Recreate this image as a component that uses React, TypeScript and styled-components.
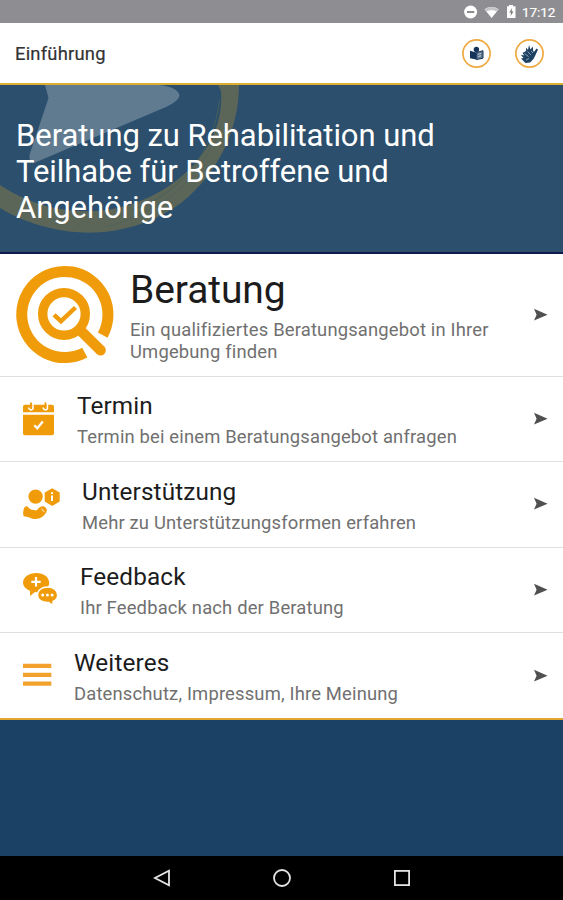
import React from "react";
import styled, { createGlobalStyle } from "styled-components";

const ORANGE = "#f09c0a";

const GlobalStyle = createGlobalStyle`
  * { box-sizing: border-box; }
  body { margin: 0; background: #1b4265; font-family: Roboto, "Liberation Sans", sans-serif; }
  svg { display: block; flex: none; }
  h1, h2, p { margin: 0; font-weight: 400; white-space: pre-line; }
`;

const Screen = styled.div`
  display: flex;
  flex-direction: column;
  height: 900px;
  overflow: hidden;
`;

const StatusBar = styled.div`
  height: 23px;
  flex: none;
  display: flex;
  align-items: center;
  justify-content: flex-end;
  padding: 1px 7px 0 0;
  background: #8e8d92;
  color: #fff;
  font-size: 13.5px;
  line-height: 20px;
`;

const Clock = styled.span`
  width: 34px;
  margin-left: 5px;
  white-space: nowrap;
  letter-spacing: -0.1px;
  -webkit-text-stroke: 0.2px #fff;
`;

const Header = styled.header`
  height: 62px;
  flex: none;
  display: flex;
  align-items: center;
  justify-content: space-between;
  padding: 1px 18px 0 15px;
  background: #fff;
  border-bottom: 2px solid #dcae32;
`;

const HeaderTitle = styled.span`
  font-size: 18.4px;
  letter-spacing: 0.22px;
  color: #333;
  -webkit-text-stroke: 0.2px #333;
`;

const HeaderActions = styled.div`
  display: flex;
  gap: 22px;
`;

const RoundButton = styled.button`
  width: 31px;
  height: 31px;
  padding: 0;
  border: 0;
  background: none;
`;

const Hero = styled.section`
  position: relative;
  height: 169px;
  flex: none;
  padding: 33px 15px 0 16px;
  overflow: hidden;
  background: #2b4f6c;
  border-bottom: 2px solid #11194c;
`;

const HeroArt = styled.svg`
  position: absolute;
  left: 0;
  top: 0;
`;

const HeroTitle = styled.h1`
  position: relative;
  font-size: 31px;
  line-height: 36px;
  letter-spacing: -0.06px;
  color: #fff;
`;

const Menu = styled.nav`
  flex: none;
  background: #fff;
  border-bottom: 2px solid #e0a52c;
`;

const Row = styled.div<{ $h: number }>`
  display: flex;
  align-items: center;
  height: ${(p) => p.$h}px;
  padding-right: 14px;
  border-bottom: 1.5px solid #dfdfdf;
  &:last-child { border-bottom: 0; }
`;

const IconSlot = styled.div<{ $w: number }>`
  width: ${(p) => p.$w}px;
  flex: none;
`;

const RowText = styled.div<{ $large?: boolean }>`
  flex: 1;
  min-width: 0;
  padding-top: ${(p) => (p.$large ? 0 : 2)}px;
`;

const RowTitle = styled.h2<{ $large?: boolean }>`
  font-size: ${(p) => (p.$large ? 39 : 24.3)}px;
  line-height: ${(p) => (p.$large ? 46 : 30)}px;
  letter-spacing: ${(p) => (p.$large ? -0.1 : 0.14)}px;
  color: #1c1c1c;
`;

const RowSub = styled.p<{ $large?: boolean }>`
  font-size: 18.4px;
  line-height: 22px;
  letter-spacing: 0.17px;
  margin-top: ${(p) => (p.$large ? 6 : 5)}px;
  color: #707070;
`;

const Filler = styled.div`
  flex: 1;
  background: #1b4265;
`;

const NavBar = styled.footer`
  height: 44px;
  flex: none;
  display: flex;
  align-items: center;
  justify-content: center;
  gap: 100px;
  background: #000;
`;

const Arrow = () => (
  <svg width="16" height="14" viewBox="0 0 16 14">
    <path d="M1 0.8 14.600 6.700 1 12.600 3.600 6.700Z" fill="#505050" />
  </svg>
);

const BeratungIcon = () => (
  <svg width="130" height="110" viewBox="0.5 259.5 130 110">
    <g fill="none" stroke={ORANGE}>
      <path d="M103.2 334.6A43.1 43.1 0 1 0 85.3 352.2" strokeWidth="11" />
      <circle cx="64.5" cy="313.4" r="21.3" strokeWidth="9.4" />
      <path d="M82 331 101.3 350" strokeWidth="10.5" />
      <path d="M101 349.7 101.1 349.8" strokeWidth="10.5" strokeLinecap="round" />
      <path d="M54.5 314.3 61.5 320.7 76 307" strokeWidth="4.4" />
    </g>
  </svg>
);

const TerminIcon = () => (
  <svg width="60" height="50" viewBox="0 393.7 60 50">
    <path d="M23 412V406.5Q23 404.5 25 404.5H52Q54 404.5 54 406.5V412Z" fill={ORANGE} />
    <path d="M23 414.4H54V433Q54 435 52 435H25Q23 435 23 433Z" fill={ORANGE} />
    <g fill="none" strokeLinecap="round">
      <path d="M28.8 407.8Q30.8 411.2 33 408.5V405M43.2 407.8Q45.2 411.2 47.4 408.5V405" stroke="#fff" strokeWidth="1.6" />
      <path d="M31 403V407M45.4 403V407" stroke={ORANGE} strokeWidth="1.9" />
      <path d="M34.3 425 37.3 428 42.8 421.2" stroke="#fff" strokeWidth="2.2" strokeLinecap="butt" />
    </g>
  </svg>
);

const SupportIcon = () => (
  <svg width="65" height="50" viewBox="0 479 65 50">
    <circle cx="35.6" cy="496.6" r="7.2" fill={ORANGE} />
    <path d="M52.2 488.3 59.7 492.5V501.5L52.2 506 44.7 501.5V492.5Z" fill={ORANGE} />
    <path d="M52 495.5V501M52 492.3V494" stroke="#fff" strokeWidth="2" />
    <path d="M24.3 507.7Q26.2 505.2 28.2 507.2 31 511 37 510.2 39.5 505.7 43.7 506.2 48.2 508.2 46.2 512.5 41.5 520.5 32.5 518.7 27.5 516.5 23.7 516.2 22.3 512 24.3 507.7Z" fill={ORANGE} />
    <path d="M41.5 508.8 44.5 512.2" stroke="#fff" strokeWidth=".9" />
  </svg>
);

const FeedbackIcon = () => (
  <svg width="65" height="50" viewBox="0 564.6 65 50">
    <path d="M36.3 572.5C44 572.5 49.2 576.8 49.2 582.3 49.2 587.8 44 591.8 36.3 591.8L35 591.7 30 595.5 30 590.3C25.7 588.6 23 585.5 23 582.3 23 576.8 28.8 572.5 36.3 572.5Z" fill={ORANGE} />
    <path d="M47.4 586.6C53.3 586.6 57.6 589.9 57.6 594.6 57.6 597.6 55.9 599.9 53 601L53 605 48.6 602.1C42 602.4 37.5 599.2 37.5 594.6 37.5 589.9 41.8 586.6 47.4 586.6Z" fill={ORANGE} stroke="#fff" strokeWidth="1.4" />
    <path d="M36 576.7V586M31.3 581.4H40.7" stroke="#fff" strokeWidth="2.2" />
    <g fill="#fff">
      <circle cx="42.7" cy="594.7" r="1.5" />
      <circle cx="47.4" cy="594.7" r="1.5" />
      <circle cx="52.1" cy="594.7" r="1.5" />
    </g>
  </svg>
);

const MoreIcon = () => (
  <svg width="60" height="50" viewBox="0 650.6 60 50">
    <path d="M23 665.5H51.3M23 674.5H51.3M23 683.3H51.3" stroke="#f2a22c" strokeWidth="4.2" />
  </svg>
);

const ReadIcon = () => (
  <svg width="31" height="31" viewBox="0 0 31 31">
    <circle cx="15.5" cy="15.5" r="13.6" fill="none" stroke="#eea941" strokeWidth="1.7" />
    <circle cx="15.4" cy="11.4" r="2.7" fill="#16345a" />
    <path d="M9 12.7 15.3 14.6V21.6L9 20.2Z" fill="#16345a" />
    <path d="M15.3 14.6 22 12.7V20.2L15.3 21.6Z" fill="#5f7790" stroke="#16345a" strokeWidth="1" />
    <path d="M17.2 16.2 20 15.5M17.2 18.5 20 17.8" stroke="#dce3e9" strokeWidth=".8" />
  </svg>
);

const SignIcon = () => (
  <svg width="31" height="31" viewBox="0 0 31 31">
    <circle cx="15.5" cy="15.5" r="13.6" fill="none" stroke="#eea941" strokeWidth="1.7" />
    <path d="M8.500 15 12 13 12 9.500 14 12 15 7 16.500 11.500 19 8.500 19 12.500 20 14 22.500 10.500 24 11.500 21.500 17 19.500 21 16 24.500 11.500 25 7 20.500 9.500 20 6.800 16.800 10.300 17.500Z" fill="#1d4163" />
    <path d="M10.500 15.500 14.500 18.500M13.500 13.500 17 17M12 22 15 20.500M17 13 19 15" stroke="#a9bac7" strokeWidth=".8" />
  </svg>
);

const rows = [
  { id: "beratung", large: true, h: 122.5, w: 130, icon: <BeratungIcon />, title: "Beratung", sub: "Ein qualifiziertes Beratungsangebot in Ihrer\nUmgebung finden" },
  { id: "termin", h: 85.5, w: 77, icon: <TerminIcon />, title: "Termin", sub: "Termin bei einem Beratungsangebot anfragen" },
  { id: "support", h: 85.5, w: 82, icon: <SupportIcon />, title: "Unterstützung", sub: "Mehr zu Unterstützungsformen erfahren" },
  { id: "feedback", h: 85.5, w: 80, icon: <FeedbackIcon />, title: "Feedback", sub: "Ihr Feedback nach der Beratung" },
  { id: "more", h: 85, w: 74, icon: <MoreIcon />, title: "Weiteres", sub: "Datenschutz, Impressum, Ihre Meinung" },
];

export default function App() {
  return (
    <Screen>
      <GlobalStyle />
      <StatusBar>
        <svg width="54" height="16" viewBox="463 4 54 16">
          <circle cx="470.6" cy="12" r="6.5" fill="#fff" />
          <path d="M467 12H474.3" stroke="#8e8d92" strokeWidth="2" />
          <path d="M484.5 9.3Q491.5 4.5 498.7 9.3L491.6 18Z" fill="#fff" />
          <path d="M484.5 9.3Q491.5 4.5 498.7 9.3L496.9 11.5Q491.5 8.5 486.3 11.5Z" fill="#c5c4c8" />
          <path d="M507 6.2H509V5H513V6.2H515.5V18H507Z" fill="#fff" />
          <path d="M512 8 509.3 12.5H511L510.6 16 513.5 11.5H511.6Z" fill="#77767b" />
        </svg>
        <Clock>17:12</Clock>
      </StatusBar>
      <Header>
        <HeaderTitle>Einführung</HeaderTitle>
        <HeaderActions>
          <RoundButton aria-label="Leichte Sprache"><ReadIcon /></RoundButton>
          <RoundButton aria-label="Gebärdensprache"><SignIcon /></RoundButton>
        </HeaderActions>
      </Header>
      <Hero>
        <HeroArt width="260" height="167" viewBox="0 85 260 167">
          <path d="M45 85H159Q178 87 179.5 95.5 179 101 166 107L34 163Q29 163 29.5 155L48.5 98Z" fill="#607b90" />
          <path d="M218 85H239C239 128 219 173 181 203 139 233 91 238 50 228 29 223 13 216 0 208V185C36 209 82 218 126 206 181 190 225 145 221 91Z" fill="#5c6658" />
          <path d="M219.5 100C214 150 183 193 132 210" fill="none" stroke="#476059" strokeWidth="1" />
          <path d="M211 146C195 184 160 211 107 227" fill="none" stroke="#50625b" strokeWidth="1" />
        </HeroArt>
        <HeroTitle>{"Beratung zu Rehabilitation und\nTeilhabe für Betroffene und\nAngehörige"}</HeroTitle>
      </Hero>
      <Menu>
        {rows.map((r) => (
          <Row key={r.id} $h={r.h}>
            <IconSlot $w={r.w}>{r.icon}</IconSlot>
            <RowText $large={r.large}>
              <RowTitle $large={r.large}>{r.title}</RowTitle>
              <RowSub $large={r.large}>{r.sub}</RowSub>
            </RowText>
            <Arrow />
          </Row>
        ))}
      </Menu>
      <Filler />
      <NavBar>
        <svg width="20" height="20" viewBox="0 0 20 20"><path d="M17 2.8V17.2L3 10Z" fill="none" stroke="#e4e4e4" strokeWidth="1.8" /></svg>
        <svg width="20" height="20" viewBox="0 0 20 20"><circle cx="10" cy="10" r="8" fill="none" stroke="#e4e4e4" strokeWidth="1.8" /></svg>
        <svg width="20" height="20" viewBox="0 0 20 20"><rect x="2.9" y="2.9" width="14.2" height="14.2" fill="none" stroke="#e4e4e4" strokeWidth="1.8" /></svg>
      </NavBar>
    </Screen>
  );
}
